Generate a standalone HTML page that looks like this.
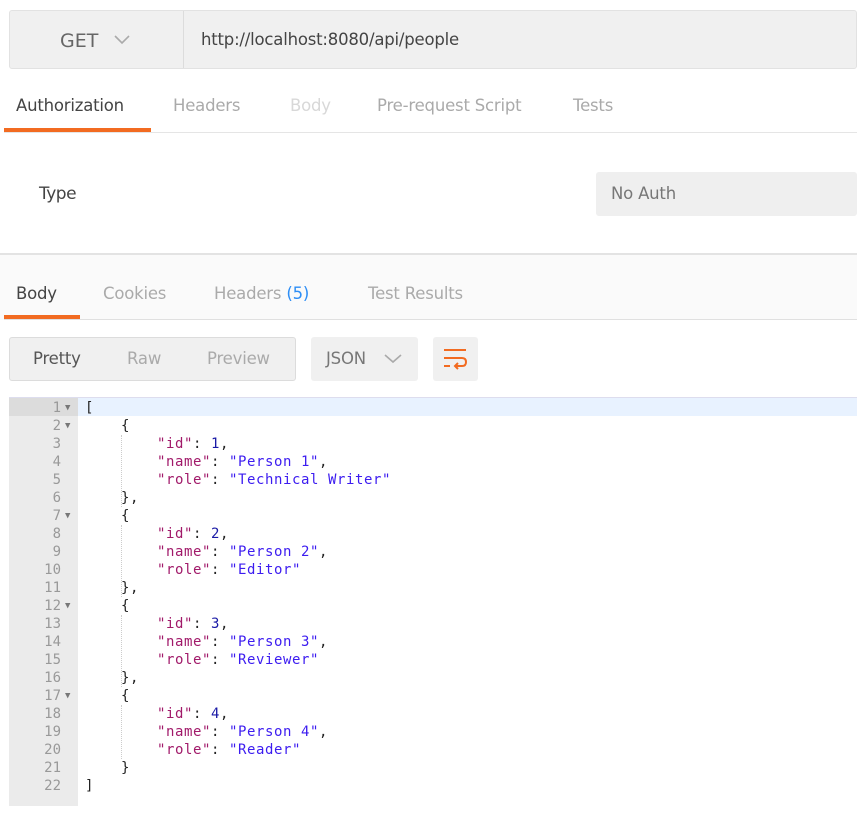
<!DOCTYPE html>
<html><head><style>
*{margin:0;padding:0;box-sizing:border-box}
body{width:864px;height:829px;background:#fff;font-family:"DejaVu Sans",sans-serif;position:relative;overflow:hidden;color:#505050}
.a{position:absolute}
.t{font-size:16.5px;letter-spacing:-0.2px}
.code{font-family:"DejaVu Sans Mono",monospace;font-size:14px;letter-spacing:0.57px;line-height:18px;white-space:pre}
.k{color:#a11a6a}.s{color:#3c1cf0}.n{color:#1a1aa6}.p{color:#222}
</style></head><body>
<div class="a" style="left:9px;top:10px;width:848px;height:59px;background:#f0f0f0;border:1px solid #e2e2e2;border-radius:3px"></div>
<div class="a" style="left:183px;top:11px;width:1px;height:57px;background:#dcdcdc"></div>
<div class="a" style="left:60px;top:30px;font-size:19px;color:#666">GET</div>
<svg class="a" style="left:113px;top:34px" width="18" height="12"><path d="M2 2 L9 9 L16 2" fill="none" stroke="#aaa" stroke-width="1.6"/></svg>
<div class="a" style="left:201px;top:30px;color:#444;font-size:16.5px;letter-spacing:-0.2px">http://localhost:8080/api/people</div>

<div class="a t" style="left:16px;top:96px;color:#444">Authorization</div>
<div class="a t" style="left:173px;top:96px;color:#aaa">Headers</div>
<div class="a t" style="left:290px;top:96px;color:#d8d8d8">Body</div>
<div class="a t" style="left:377px;top:96px;color:#aaa">Pre-request Script</div>
<div class="a t" style="left:573px;top:96px;color:#aaa">Tests</div>
<div class="a" style="left:4px;top:128px;width:147px;height:4px;background:#f26b21"></div>
<div class="a" style="left:4px;top:132px;width:853px;height:1px;background:#e5e5e5"></div>

<div class="a" style="left:39px;top:184px;font-size:17px;color:#444;letter-spacing:-0.5px">Type</div>
<div class="a" style="left:596px;top:172px;width:261px;height:44px;background:#efefef;border-radius:3px"></div>
<div class="a t" style="left:611px;top:184px;color:#777">No Auth</div>

<div class="a" style="left:0;top:253px;width:857px;height:2px;background:#e3e3e3"></div>
<div class="a" style="left:0;top:255px;width:857px;height:65px;background:#fafafa"></div>
<div class="a t" style="left:16px;top:284px;color:#444">Body</div>
<div class="a t" style="left:103px;top:284px;color:#aaa">Cookies</div>
<div class="a t" style="left:214px;top:284px;color:#aaa">Headers <span style="color:#2e8ef5">(5)</span></div>
<div class="a t" style="left:368px;top:284px;color:#aaa">Test Results</div>
<div class="a" style="left:4px;top:315px;width:76px;height:4px;background:#f26b21"></div>
<div class="a" style="left:4px;top:319px;width:853px;height:1px;background:#e0e0e0"></div>

<div class="a" style="left:9px;top:337px;width:287px;height:44px;background:#f0f0f0;border:1px solid #dcdcdc;border-radius:3px"></div>
<div class="a t" style="left:33px;top:349px;color:#555">Pretty</div>
<div class="a t" style="left:127px;top:349px;color:#aaa">Raw</div>
<div class="a t" style="left:207px;top:349px;color:#aaa">Preview</div>
<div class="a" style="left:311px;top:337px;width:107px;height:44px;background:#f0f0f0;border-radius:3px"></div>
<div class="a t" style="left:326px;top:349px;color:#777">JSON</div>
<svg class="a" style="left:383px;top:353px" width="20" height="12"><path d="M2 2 L10 9 L18 2" fill="none" stroke="#aaa" stroke-width="1.6"/></svg>
<div class="a" style="left:433px;top:337px;width:45px;height:44px;background:#f0f0f0;border-radius:3px"></div>
<svg class="a" style="left:442px;top:347px" width="26" height="24"><path d="M2 3 H24 M2 11 H20 Q24 11 24 15 Q24 19 20 19 H13 M16 16 L13 19 L16 22 M2 19 H8" fill="none" stroke="#f26b21" stroke-width="2"/></svg>

<div class="a" style="left:9px;top:397px;width:848px;height:1px;background:#dde"></div>
<div class="a" style="left:9px;top:398px;width:69px;height:408px;background:#ebebeb"></div>
<div class="a" style="left:9px;top:398px;width:69px;height:18px;background:#dcdcdc"></div>
<div class="a" style="left:78px;top:398px;width:779px;height:18px;background:#e8f2ff"></div>
<div class="a" style="left:121px;top:435px;height:72px;border-left:1px dotted #ccc"></div>
<div class="a" style="left:121px;top:525px;height:72px;border-left:1px dotted #ccc"></div>
<div class="a" style="left:121px;top:615px;height:72px;border-left:1px dotted #ccc"></div>
<div class="a" style="left:121px;top:705px;height:54px;border-left:1px dotted #ccc"></div>
<div class="a code" style="left:9px;top:399px;width:52px;text-align:right;color:#999;letter-spacing:0">1
2
3
4
5
6
7
8
9
10
11
12
13
14
15
16
17
18
19
20
21
22</div>
<div class="a code" style="left:65px;top:399px;color:#777;font-size:9px;letter-spacing:0">▼
▼




▼




▼




▼</div>
<div class="a code p" style="left:85px;top:399px">[
    {
        <span class="k">"id"</span>: <span class="n">1</span>,
        <span class="k">"name"</span>: <span class="s">"Person 1"</span>,
        <span class="k">"role"</span>: <span class="s">"Technical Writer"</span>
    },
    {
        <span class="k">"id"</span>: <span class="n">2</span>,
        <span class="k">"name"</span>: <span class="s">"Person 2"</span>,
        <span class="k">"role"</span>: <span class="s">"Editor"</span>
    },
    {
        <span class="k">"id"</span>: <span class="n">3</span>,
        <span class="k">"name"</span>: <span class="s">"Person 3"</span>,
        <span class="k">"role"</span>: <span class="s">"Reviewer"</span>
    },
    {
        <span class="k">"id"</span>: <span class="n">4</span>,
        <span class="k">"name"</span>: <span class="s">"Person 4"</span>,
        <span class="k">"role"</span>: <span class="s">"Reader"</span>
    }
]</div>
</body></html>
